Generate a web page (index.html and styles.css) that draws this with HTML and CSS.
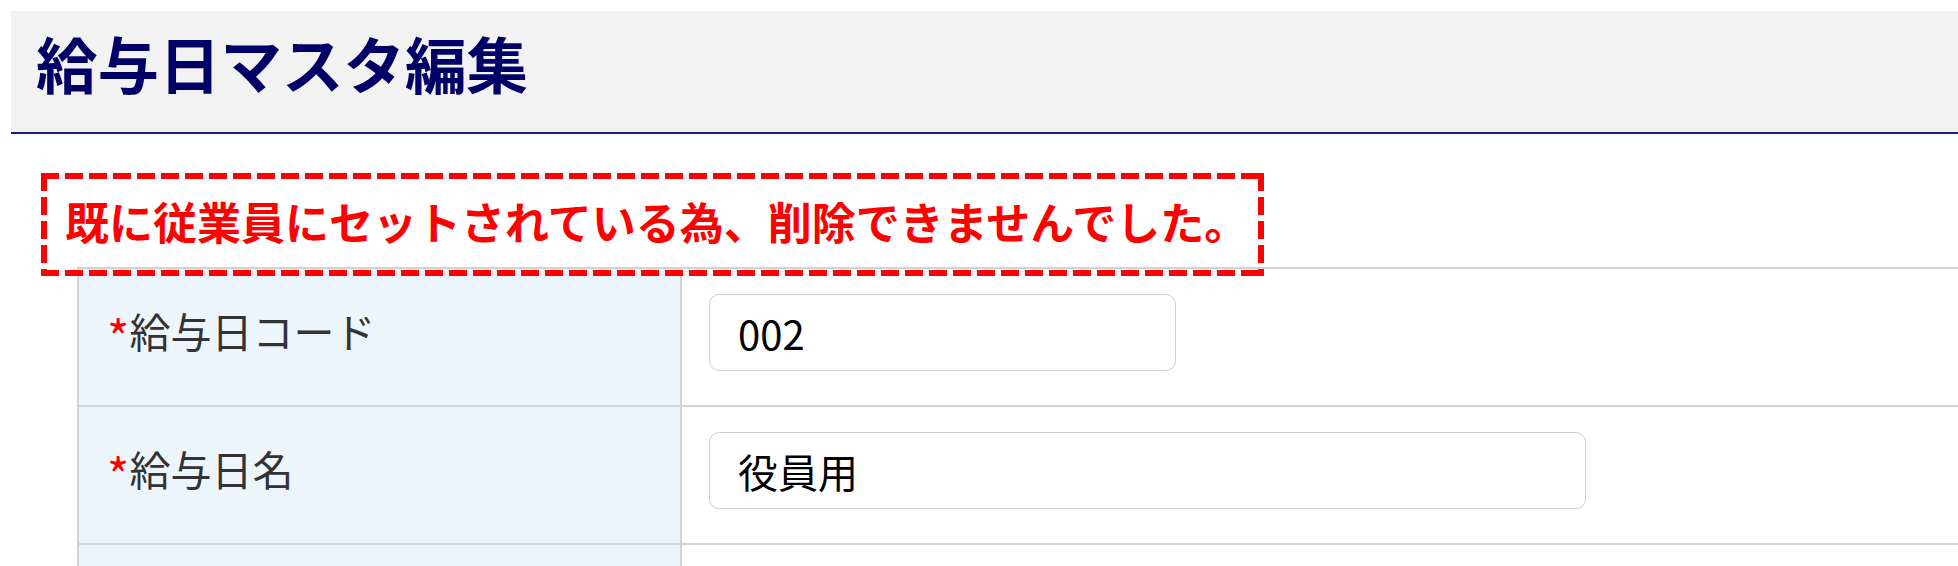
FILE: index.html
```html
<!DOCTYPE html>
<html lang="ja">
<head>
<meta charset="utf-8">
<title>給与日マスタ編集</title>
<link rel="stylesheet" href="styles.css">
</head>
<body>
<div class="page">
  <header class="header">
    <h1 class="title">給与日マスタ編集</h1>
  </header>
  <main class="content">
    <div class="error">既に従業員にセットされている為、削除できませんでした。</div>
    <div class="form">
      <div class="row">
        <div class="label"><span class="req">*</span>給与日コード</div>
        <div class="value"><input class="field field-short" type="text" value="002"></div>
      </div>
      <div class="row">
        <div class="label"><span class="req">*</span>給与日名</div>
        <div class="value"><input class="field field-long" type="text" value="役員用"></div>
      </div>
      <div class="row">
        <div class="label"></div>
        <div class="value"></div>
      </div>
    </div>
  </main>
</div>
</body>
</html>
```

FILE: styles.css
```css
html, body {
  margin: 0;
  padding: 0;
  background: #ffffff;
  overflow: hidden;
}

body {
  font-family: "Noto Sans CJK JP", "Noto Sans", sans-serif;
}

.page {
  padding: 11px 0 0 11px;
}

.header {
  background: #f2f2f2;
  border-bottom: 2px solid #1d1d74;
  padding: 22px 0 39px 25px;
}

.title {
  margin: 0;
  font-size: 61.5px;
  line-height: 60px;
  font-weight: 700;
  color: #000066;
}

.content {
  padding-top: 39px;
}

.error {
  position: relative;
  z-index: 1;
  width: max-content;
  margin: 0 0 -9px 30px;
  border: 6px solid transparent;
  padding: 12px 10px 18px 18px;
  font-size: 44px;
  line-height: 61px;
  font-weight: 700;
  color: #ff0000;
  background:
    repeating-linear-gradient(90deg, #ff0000 0 18px, transparent 18px 24px) left top / 100% 6px no-repeat,
    repeating-linear-gradient(90deg, #ff0000 0 18px, transparent 18px 24px) left bottom / 100% 6px no-repeat,
    repeating-linear-gradient(180deg, #ff0000 0 18px, transparent 18px 24px) left top / 6px 100% no-repeat,
    repeating-linear-gradient(180deg, #ff0000 0 18px, transparent 18px 24px) right top / 6px 100% no-repeat;
  background-origin: border-box;
  background-clip: border-box;
}

.form {
  margin-left: 66px;
  border-top: 2px solid #d3d3d3;
  border-left: 2px solid #d3d3d3;
}

.row {
  display: grid;
  grid-template-columns: 603px 1fr;
  border-bottom: 2px solid #d3d3d3;
}

.label {
  box-sizing: border-box;
  height: 136px;
  background: #edf5fc;
  border-right: 2px solid #d3d3d3;
  padding: 31px 0 0 28px;
  font-size: 41px;
  line-height: 60px;
  color: #333333;
}

.req {
  color: #ff0000;
  font-size: 48px;
  vertical-align: -8px;
}

.value {
  padding: 25px 0 0 27px;
}

.field {
  box-sizing: border-box;
  display: block;
  height: 77px;
  margin: 0;
  border: 1.5px solid #cfcfcf;
  border-radius: 10px;
  padding: 0 28px;
  font-family: "Noto Sans CJK JP", "Noto Sans", sans-serif;
  font-size: 40px;
  color: #000000;
  background: #ffffff;
  outline: none;
}

.field-short {
  width: 467px;
}

.field-long {
  width: 877px;
}
```
